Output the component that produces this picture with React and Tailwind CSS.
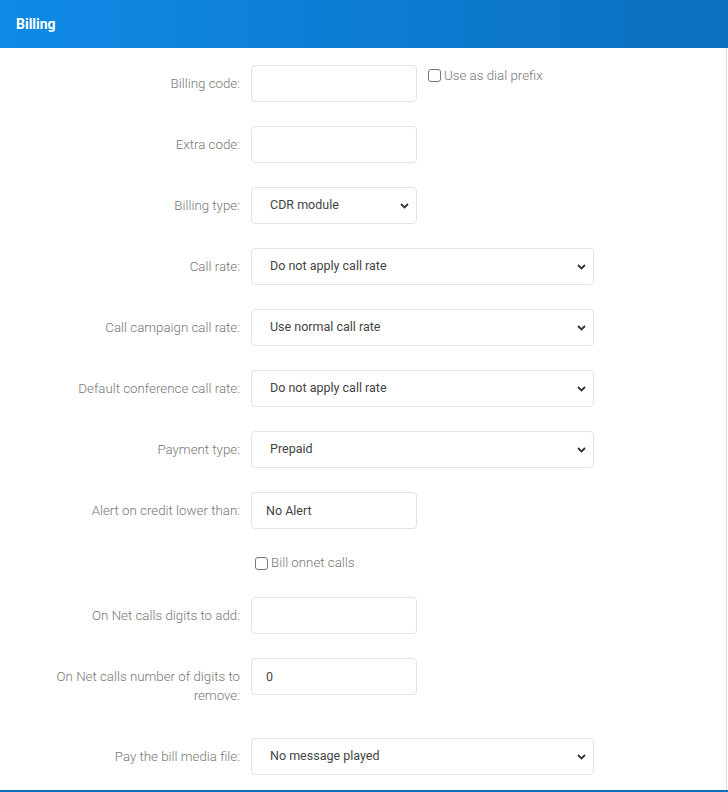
import React from 'react';

const Chevron = () => (
  <svg width="9" height="6" viewBox="0 0 9 6" className="absolute right-[8px] top-1/2 -translate-y-1/2 pointer-events-none">
    <path d="M1 1l3.5 3.5L8 1" fill="none" stroke="#333" strokeWidth="1.8" />
  </svg>
);

const Label = ({ children }) => (
  <label className="w-[194px] shrink-0 text-right text-[13.3px] font-light leading-[19px] text-[#777] pt-[9px] pb-[9px]">{children}</label>
);

const TextField = ({ value = '' }) => (
  <input
    type="text"
    defaultValue={value}
    className="w-[166px] h-[37px] border border-[#e3e3e3] rounded-[4px] pl-[14px] text-[12.5px] text-[#444] outline-none bg-white"
  />
);

const Select = ({ value, wide }) => (
  <div className={`relative ${wide ? 'w-[343px]' : 'w-[166px]'} h-[37px]`}>
    <select
      defaultValue={value}
      className="appearance-none w-full h-full border border-[#e3e3e3] rounded-[4px] pl-[18px] text-[12.5px] text-[#444] bg-white outline-none"
    >
      <option>{value}</option>
    </select>
    <Chevron />
  </div>
);

const Row = ({ label, children }) => (
  <div className="flex items-start gap-[11px]">
    <Label>{label}</Label>
    {children}
  </div>
);

const Check = ({ label }) => (
  <label className="flex items-center gap-[3px] text-[13.3px] font-light text-[#777]">
    <span className="w-[13px] h-[13px] border border-[#767676] rounded-[3px] bg-white" />
    {label}
  </label>
);

export default function App() {
  return (
    <div className="w-[728px] h-[792px] overflow-hidden bg-white" style={{ fontFamily: 'Roboto, "Liberation Sans", sans-serif' }}>
      <div className="h-[48px] bg-gradient-to-r from-[#0f8ae6] to-[#0b6fbf] flex items-center pl-[16px] pt-[1px]">
        <span className="text-white text-[14px] font-bold">Billing</span>
      </div>
      <div className="w-[727px] border-r border-[#dcdcdc] h-[742px] pt-[17px] pl-[46px] flex flex-col gap-[24px]">
        <Row label="Billing code:">
          <TextField />
          <div className="pt-[1px]">
            <Check label="Use as dial prefix" />
          </div>
        </Row>
        <Row label="Extra code:"><TextField /></Row>
        <Row label="Billing type:"><Select value="CDR module" /></Row>
        <Row label="Call rate:"><Select wide value="Do not apply call rate" /></Row>
        <Row label="Call campaign call rate:"><Select wide value="Use normal call rate" /></Row>
        <Row label="Default conference call rate:"><Select wide value="Do not apply call rate" /></Row>
        <Row label="Payment type:"><Select wide value="Prepaid" /></Row>
        <Row label="Alert on credit lower than:"><TextField value="No Alert" /></Row>
        <div className="pl-[209px] h-[20px] flex items-center">
          <Check label="Bill onnet calls" />
        </div>
        <Row label="On Net calls digits to add:"><TextField /></Row>
        <Row label="On Net calls number of digits to remove:"><TextField value="0" /></Row>
        <Row label="Pay the bill media file:"><Select wide value="No message played" /></Row>
      </div>
      <div className="h-[2px] bg-[#0b6fbf]" />
    </div>
  );
}
